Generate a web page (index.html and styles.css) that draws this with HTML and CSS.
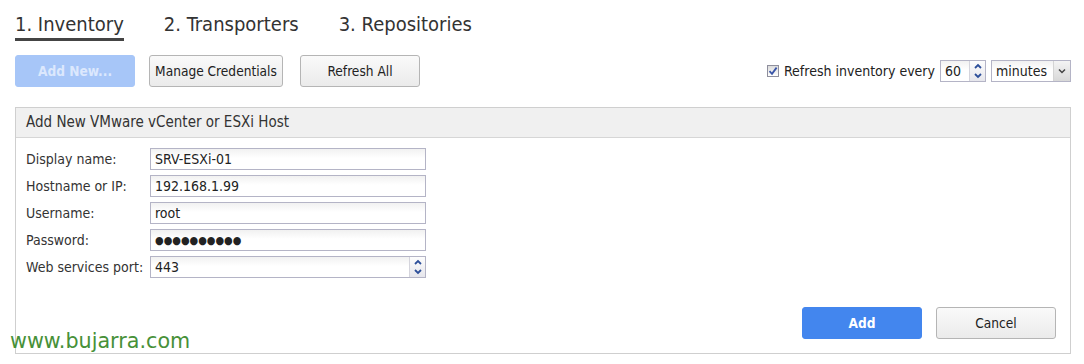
FILE: index.html
```html
<!DOCTYPE html>
<html lang="en">
<head>
  <meta charset="UTF-8">
  <title>Inventory</title>
  <link rel="stylesheet" href="styles.css">
</head>
<body>
  <div class="page">
    <nav class="tabs">
      <span class="tab active">1. Inventory</span>
      <span class="tab">2. Transporters</span>
      <span class="tab">3. Repositories</span>
    </nav>

    <div class="toolbar">
      <button class="btn btn-primary disabled">Add New...</button>
      <button class="btn btn-creds">Manage Credentials</button>
      <button class="btn btn-wide btn-refresh">Refresh All</button>

      <div class="refresh">
        <span class="check">
          <svg width="10" height="10" viewBox="0 0 10 10"><path d="M1.5 5.2 L4 7.8 L8.6 1.6" fill="none" stroke="#3a55a8" stroke-width="1.8"/></svg>
        </span>
        <span>Refresh inventory every</span>
        <span class="field num small">
          <span class="value">60</span>
          <span class="spin">
            <svg width="12" height="20" viewBox="0 0 12 20"><path d="M3 7 L6 4 L9 7" fill="none" stroke="#2d4f9a" stroke-width="1.8"/><path d="M3 13 L6 16 L9 13" fill="none" stroke="#2d4f9a" stroke-width="1.8"/></svg>
          </span>
        </span>
        <span class="field select">
          <span class="value">minutes</span>
          <span class="caret">
            <svg width="8" height="6" viewBox="0 0 8 6"><path d="M1 1.5 L4 4.5 L7 1.5" fill="none" stroke="#444" stroke-width="1.5"/></svg>
          </span>
        </span>
      </div>
    </div>

    <section class="panel">
      <div class="panel-head">Add New VMware vCenter or ESXi Host</div>
      <div class="panel-body">
        <div class="form">
          <label>Display name:</label>
          <div class="field"><span class="value">SRV-ESXi-01</span></div>
          <label>Hostname or IP:</label>
          <div class="field"><span class="value">192.168.1.99</span></div>
          <label>Username:</label>
          <div class="field"><span class="value">root</span></div>
          <label>Password:</label>
          <div class="field"><span class="value dots">●●●●●●●●●●</span></div>
          <label>Web services port:</label>
          <div class="field num">
            <span class="value">443</span>
            <span class="spin">
              <svg width="12" height="20" viewBox="0 0 12 20"><path d="M3 7 L6 4 L9 7" fill="none" stroke="#2d4f9a" stroke-width="1.8"/><path d="M3 13 L6 16 L9 13" fill="none" stroke="#2d4f9a" stroke-width="1.8"/></svg>
            </span>
          </div>
        </div>

        <div class="actions">
          <button class="btn btn-primary btn-wide">Add</button>
          <button class="btn btn-wide">Cancel</button>
        </div>
      </div>
    </section>
  </div>

  <div class="watermark">www.bujarra.com</div>
</body>
</html>
```

FILE: styles.css
```css
body {
  margin: 0;
  background-color: #fff;
  color: #222;
  font-family: 'DejaVu Sans', Verdana, sans-serif;
  font-stretch: condensed;
  font-size: 13px;
}

.page {
  padding: 12px 13px 0 15px;
}

.tabs {
  display: flex;
  gap: 40px;
  font-size: 20px;
  line-height: 24px;
}

.tab {
  color: #333;
  padding-bottom: 2px;
  border-bottom: 3px solid transparent;
}

.tab.active {
  border-bottom-color: #444;
}

.toolbar {
  display: flex;
  align-items: center;
  gap: 14px;
  margin-top: 14px;
}

.btn {
  font-family: inherit;
  font-stretch: condensed;
  font-size: 13.6px;
  height: 32px;
  padding: 0;
  white-space: nowrap;
  color: #222;
  background: linear-gradient(#fafafa, #ebebeb);
  border: 1px solid #b5b5b5;
  border-radius: 3px;
}

.btn-wide {
  width: 120px;
}

.btn-creds {
  width: 134px;
}

.btn-refresh {
  margin-left: 3px;
}

.btn-primary {
  width: 120px;
  color: #fff;
  font-weight: bold;
  background: #4386ee;
  border-color: #4386ee;
}

.btn-primary.disabled {
  color: #dce8fd;
  background: #a7c6f8;
  border-color: #a7c6f8;
}

.refresh {
  margin-left: auto;
  display: flex;
  align-items: center;
  gap: 5px;
  font-size: 14px;
}

.check {
  width: 10px;
  height: 10px;
  border: 1px solid #8f8f9d;
  background: linear-gradient(#dcdcdc, #fff);
  display: flex;
  align-items: center;
  justify-content: center;
}

.field {
  display: flex;
  align-items: center;
  height: 20px;
  border: 1px solid #b4b4c6;
  background: linear-gradient(#f1f1f1, #fff 45%);
  color: #222;
  font-size: 14px;
}

.field .value {
  flex: 1;
  padding-left: 4px;
}

.field.small {
  width: 44px;
}

.field.select {
  width: 78px;
}

.spin {
  width: 15px;
  height: 20px;
  display: flex;
  align-items: center;
  justify-content: center;
  border-left: 1px solid #d4d4dc;
  background: linear-gradient(#fdfdfd, #e6e6ec);
}

.caret {
  width: 16px;
  height: 20px;
  display: flex;
  align-items: center;
  justify-content: center;
  border-left: 1px solid #d4d4d4;
  background: linear-gradient(#f4f4f4, #d8d8d8);
}

.panel {
  margin-top: 20px;
  border: 1px solid #cfcfcf;
  height: 245px;
  display: flex;
  flex-direction: column;
}

.panel-head {
  height: 29px;
  line-height: 29px;
  padding-left: 10px;
  background: #f0f0f0;
  border-bottom: 1px solid #d6d6d6;
  font-size: 15px;
  color: #333;
}

.panel-body {
  flex: 1;
  display: flex;
  flex-direction: column;
  padding: 10px 14px 14px 10px;
}

.form {
  display: grid;
  grid-template-columns: 124px 276px;
  row-gap: 5px;
  align-items: center;
}

.form label {
  font-size: 14px;
  color: #333;
}

.dots {
  font-size: 11px;
}

.actions {
  margin-top: auto;
  display: flex;
  justify-content: flex-end;
  gap: 14px;
}

.watermark {
  position: absolute;
  left: 10px;
  top: 329px;
  font-family: 'DejaVu Sans', Verdana, sans-serif;
  font-stretch: normal;
  font-size: 20.7px;
  color: #479138;
}
```
